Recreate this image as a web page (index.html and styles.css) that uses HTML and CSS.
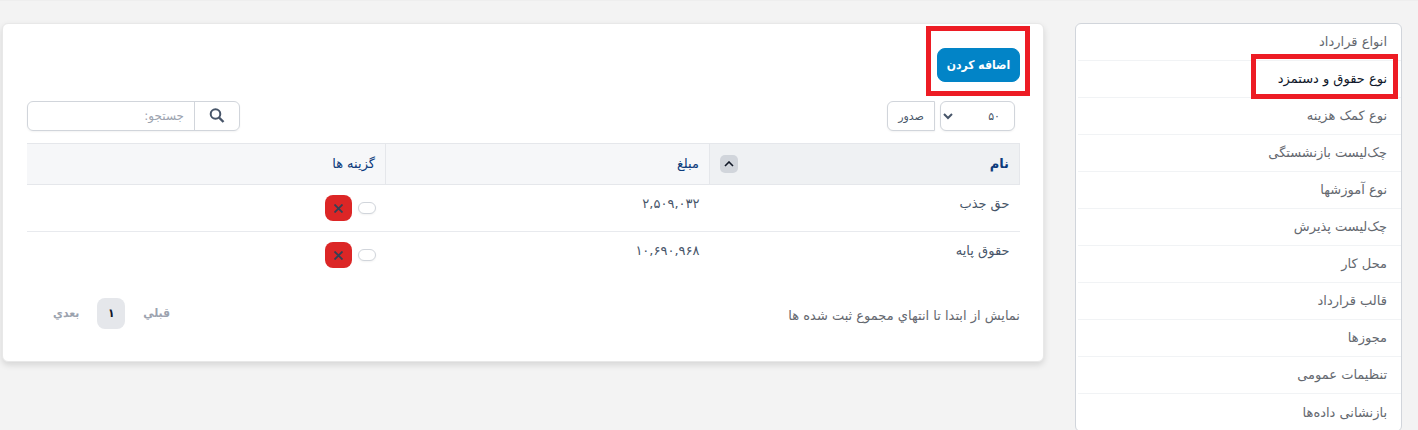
FILE: index.html
```html
<!DOCTYPE html>
<html lang="fa" dir="rtl">
<head>
    <meta charset="UTF-8">
    <meta name="viewport" content="width=device-width, initial-scale=1.0">
    <title>نوع حقوق و دستمزد</title>
    <link rel="stylesheet" href="styles.css">
</head>
<body>
    <div class="layout">
        <nav class="sidebar">
            <ul class="menu">
                <li><a href="#">انواع قرارداد</a></li>
                <li><a href="#" class="active marked">نوع حقوق و دستمزد</a></li>
                <li><a href="#">نوع کمک هزینه</a></li>
                <li><a href="#">چک‌لیست بازنشستگی</a></li>
                <li><a href="#">نوع آموزشها</a></li>
                <li><a href="#">چک‌لیست پذیرش</a></li>
                <li><a href="#">محل کار</a></li>
                <li><a href="#">قالب قرارداد</a></li>
                <li><a href="#">مجوزها</a></li>
                <li><a href="#">تنظیمات عمومی</a></li>
                <li><a href="#">بازنشانی داده‌ها</a></li>
            </ul>
        </nav>

        <main class="panel">
            <div class="marked">
                <button type="button" class="btn-primary">اضافه کردن</button>
            </div>

            <div class="toolbar">
                <div class="tools">
                    <select class="length" aria-label="تعداد ردیف">
                        <option>۵۰</option>
                    </select>
                    <button type="button" class="export">صدور</button>
                </div>
                <div class="search">
                    <label for="search">
                        <svg width="16" height="16" viewBox="0 0 16 16" role="img" aria-label="جستجو"><circle cx="6.5" cy="6" r="4.8" fill="none" stroke="#475569" stroke-width="2"/><path d="M10 9.5L14.5 14" stroke="#475569" stroke-width="2.4"/></svg>
                    </label>
                    <input type="search" id="search" placeholder="جستجو:">
                </div>
            </div>

            <table>
                <thead>
                    <tr>
                        <th class="col-name sorted">
                            <div class="th-inner">
                                نام
                                <button type="button" class="sort" aria-label="مرتب سازی">
                                    <svg width="10" height="6" viewBox="0 0 10 6"><path d="M1 5l4-4 4 4" fill="none" stroke="#111827" stroke-width="1.6"/></svg>
                                </button>
                            </div>
                        </th>
                        <th class="col-amount">مبلغ</th>
                        <th>گزینه ها</th>
                    </tr>
                </thead>
                <tbody>
                    <tr>
                        <td>حق جذب</td>
                        <td>۲,۵۰۹,۰۳۲</td>
                        <td>
                            <div class="actions">
                                <button type="button" class="edit" aria-label="ویرایش"></button>
                                <button type="button" class="delete" aria-label="حذف">
                                    <svg width="9" height="9" viewBox="0 0 9 9"><path d="M.5 .5l8 8M8.5 .5l-8 8" stroke="#334155" stroke-width="1.8"/></svg>
                                </button>
                            </div>
                        </td>
                    </tr>
                    <tr>
                        <td>حقوق پایه</td>
                        <td>۱۰,۶۹۰,۹۶۸</td>
                        <td>
                            <div class="actions">
                                <button type="button" class="edit" aria-label="ویرایش"></button>
                                <button type="button" class="delete" aria-label="حذف">
                                    <svg width="9" height="9" viewBox="0 0 9 9"><path d="M.5 .5l8 8M8.5 .5l-8 8" stroke="#334155" stroke-width="1.8"/></svg>
                                </button>
                            </div>
                        </td>
                    </tr>
                </tbody>
            </table>

            <div class="footer">
                <p class="info">نمایش از ابتدا تا انتهاي مجموع ثبت شده ها</p>
                <div class="pagination">
                    <a href="#">قبلي</a>
                    <a href="#" class="current">۱</a>
                    <a href="#">بعدي</a>
                </div>
            </div>
        </main>
    </div>
</body>
</html>
```
FILE: styles.css
```css
* { box-sizing: border-box; }
body { margin: 0; background: #f3f3f3; border-top: 1px solid #eeeeee; font-family: "DejaVu Sans", sans-serif; font-size: 13px; line-height: 20px; color: #475569; }
button, input, select { font-family: inherit; font-size: 12px; color: inherit; margin: 0; }
a { text-decoration: none; color: inherit; }

.layout { display: flex; align-items: flex-start; gap: 31px; padding: 22px 16px 0 2px; }

/* sidebar */
.sidebar { width: 327px; flex-shrink: 0; background: white; border: 1px solid #d1d5db; border-radius: 6px; }
.menu { list-style: none; margin: 0; padding: 0 0 0 2px; }
.menu li { height: 37px; display: flex; align-items: center; padding: 0 14px; border-bottom: 1px solid #f1f3f5; }
.menu li:last-child { border-bottom: none; }
.menu a { color: #64686f; }
.menu a.active { color: #0f172a; }

/* red highlight frame */
.marked { position: relative; align-self: flex-start; }
.marked::after { content: ""; position: absolute; inset: -22px -10px -14px -11px; border: 5px solid #ed1c24; pointer-events: none; }
.menu .marked { align-self: center; }
.menu .marked::after { inset: -15px -11px -10px -27px; }

/* main card */
.panel { flex: 1; min-width: 0; display: flex; flex-direction: column; background: white; padding: 24px 23px 24px 24px; border: 1px solid #e8e8e8; border-radius: 6px; box-shadow: 0 3px 6px rgba(0, 0, 0, 0.12); }
.btn-primary { display: block; height: 34px; min-width: 83px; padding: 0 8px; border: 1px solid #0284c7; border-radius: 8px; background: #0284c7; color: white; font-family: "DejaVu Sans Condensed", "DejaVu Sans", sans-serif; font-weight: bold; }

.toolbar { display: flex; justify-content: space-between; margin: 19px 0 12px; }
.tools { display: flex; gap: 5px; padding-right: 5px; }
.length, .export { height: 30px; background: white; border: 1px solid #d1d5db; font-size: 11px; box-shadow: 0 1px 2px rgba(0, 0, 0, 0.05); }
.length { width: 75px; padding: 0 10px 0 0; border-radius: 6px; }
.export { width: 48px; padding: 0; border-radius: 6px 0 0 6px; }
.search { display: flex; width: 213px; height: 30px; border: 1px solid #d1d5db; border-radius: 6px; box-shadow: 0 1px 2px rgba(0, 0, 0, 0.05); }
.search label { width: 45px; display: flex; align-items: center; justify-content: center; border-left: 1px solid #d1d5db; }
.search input { flex: 1; min-width: 0; padding: 0 10px; border: none; background: transparent; }
.search input::placeholder { color: #9ca3af; }

table { width: 100%; table-layout: fixed; border-collapse: collapse; }
th { height: 41px; padding: 0 10px; text-align: right; font-weight: normal; color: #0c3b7c; background: #f6f7f9; border-top: 1px solid #e5e7eb; border-bottom: 1px solid #e5e7eb; border-left: 1px solid #e5e7eb; }
th:last-child { border-left: none; }
th.sorted { background: #eff1f3; font-weight: bold; border-right: 1px solid #e5e7eb; }
.col-name { width: 310px; }
.col-amount { width: 324px; }
.th-inner { display: flex; align-items: center; justify-content: space-between; }
.sort { display: flex; align-items: center; justify-content: center; width: 18px; height: 18px; padding: 0; border: none; border-radius: 5px; background: #d1d5db; }
td { height: 47px; padding: 9px 10px; vertical-align: top; }
tbody tr + tr { border-top: 1px solid #e8eaee; }

.actions { display: flex; align-items: center; gap: 6px; padding-top: 1px; }
.edit { width: 18px; height: 12px; padding: 0; border: 1px solid #d1d5db; border-radius: 6px; background: white; box-shadow: 0 1px 2px rgba(0, 0, 0, 0.05); }
.delete { display: flex; align-items: center; justify-content: center; width: 27px; height: 26px; padding: 0; border: none; border-radius: 8px; background: #dc2626; }

.footer { display: flex; justify-content: space-between; align-items: flex-start; padding: 19px 0 8px; }
.info { margin: 8px 0 0; color: #64686f; }
.pagination { display: flex; align-items: center; gap: 18px; padding-left: 26px; font-family: "DejaVu Sans Condensed", "DejaVu Sans", sans-serif; font-size: 12px; font-weight: bold; color: #9ca3af; }
.current { width: 28px; height: 31px; display: flex; align-items: center; justify-content: center; border-radius: 8px; background: #e5e7eb; color: #0f172a; }
```
